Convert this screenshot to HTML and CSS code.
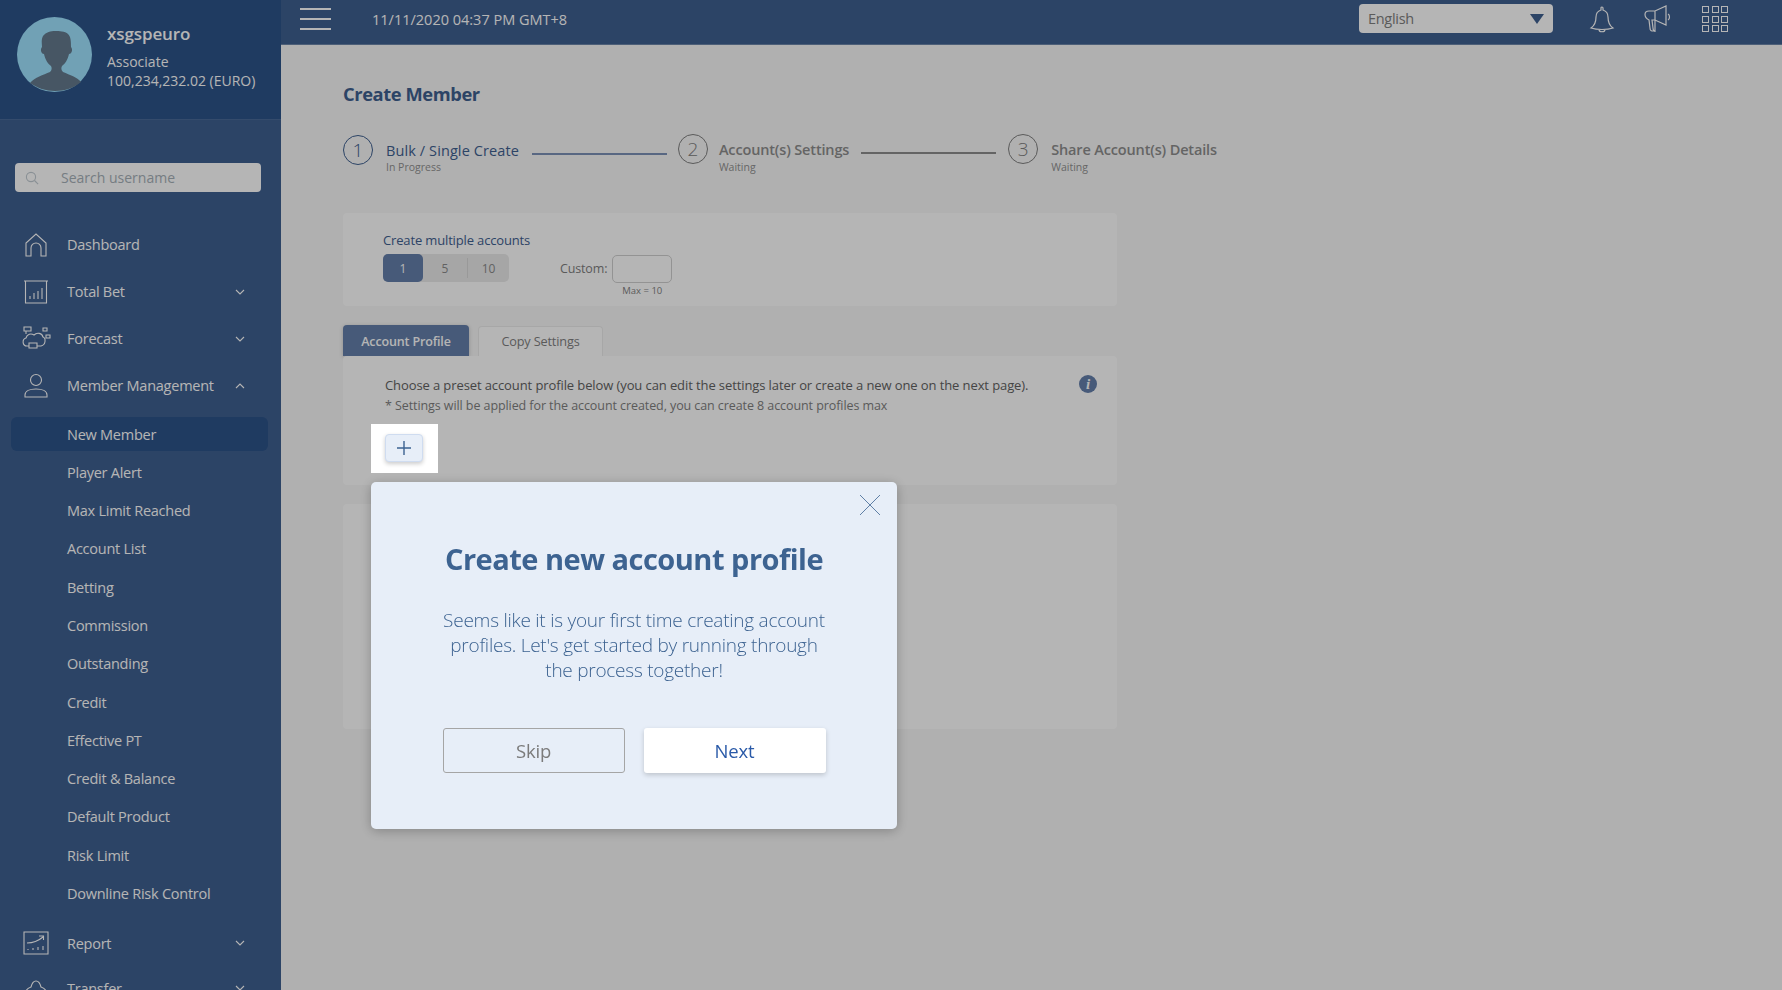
FILE: index.html

```html
<!DOCTYPE html>
<html lang="en">
<head>
    <meta charset="UTF-8">
    <meta name="viewport" content="width=device-width, initial-scale=1.0">
    <title>Create Member</title>
    <link rel="stylesheet" href="styles.css">
</head>
<body>
    <div class="app">
        <aside class="sidebar">
            <div class="profile">
                <svg class="avatar" viewBox="0 0 75 75">
                    <circle class="avatar-bg" cx="37.5" cy="37.5" r="37.5"/>
                    <path class="avatar-fg" d="M13 66c5-6 13-8 20-11 2-2 2-4 1-6-3-2-6-7-7-12-3 0-4-5-2-7 0-4-1-7 1-11 3-4 8-5 12-5 4 0 10 0 13 3 3 3 3 8 3 13 2 2 1 7-2 7-1 5-4 10-7 12-1 2-1 4 1 6 7 3 14 5 18 10-7 6-16 9-26 9-9 0-18-3-25-8z"/>
                </svg>
                <div class="profile-info">
                    <div class="profile-name">xsgspeuro</div>
                    <div class="profile-line">Associate</div>
                    <div class="profile-line">100,234,232.02 (EURO)</div>
                </div>
            </div>

            <div class="search">
                <svg class="search-icon" viewBox="0 0 14 14"><circle cx="6" cy="6" r="4.6"/><path d="M9.5 9.5l3.6 3.6"/></svg>
                <span>Search username</span>
            </div>

            <nav class="nav">
                <div class="nav-item">
                    <svg class="nav-icon" viewBox="0 0 26 26"><path d="M3 24V11L13 2l10 9v13h-5v-8a5 5 0 0 0-10 0v8z"/></svg>
                    <span>Dashboard</span>
                </div>
                <div class="nav-item">
                    <svg class="nav-icon" viewBox="0 0 26 26"><path d="M1 2h24M2.500 2v22h21V2M7 20v-3M11 20v-6M15 20v-8M19 20V9"/></svg>
                    <span>Total Bet</span>
                    <svg class="chevron" viewBox="0 0 10 6"><path d="M1 1l4 4 4-4"/></svg>
                </div>
                <div class="nav-item">
                    <svg class="nav-icon wide" viewBox="0 0 30 26"><path d="M8 20H6c-5 0-5-7-1-8 1-4 5-5 8-3 3-3 8-2 9 2 3 1 3 8-2 9h-4M8 17h8v5H8zM3 1h7v4H3zM5 5v3M22 2h4v3h-4zM25 9h4v3h-4z"/></svg>
                    <span>Forecast</span>
                    <svg class="chevron" viewBox="0 0 10 6"><path d="M1 1l4 4 4-4"/></svg>
                </div>
                <div class="nav-item">
                    <svg class="nav-icon" viewBox="0 0 26 26"><circle cx="13" cy="7" r="5.500"/><path d="M2 24v-2c0-4 5-6 11-6s11 2 11 6v2z"/></svg>
                    <span>Member Management</span>
                    <svg class="chevron" viewBox="0 0 10 6"><path d="M1 5l4-4 4 4"/></svg>
                </div>
                <div class="sub-list">
                    <a class="sub-item active">New Member</a>
                    <a class="sub-item">Player Alert</a>
                    <a class="sub-item">Max Limit Reached</a>
                    <a class="sub-item">Account List</a>
                    <a class="sub-item">Betting</a>
                    <a class="sub-item">Commission</a>
                    <a class="sub-item">Outstanding</a>
                    <a class="sub-item">Credit</a>
                    <a class="sub-item">Effective PT</a>
                    <a class="sub-item">Credit &amp; Balance</a>
                    <a class="sub-item">Default Product</a>
                    <a class="sub-item">Risk Limit</a>
                    <a class="sub-item">Downline Risk Control</a>
                </div>
                <div class="nav-item">
                    <svg class="nav-icon" viewBox="0 0 26 26"><path d="M1 2h24v22H1zM4 13c5 0 10-1 16-6M16 6h4.500v4M5 20v-1M10 20v-2M15 20v-3M20 20v-4"/></svg>
                    <span>Report</span>
                    <svg class="chevron" viewBox="0 0 10 6"><path d="M1 1l4 4 4-4"/></svg>
                </div>
                <div class="nav-item short">
                    <svg class="nav-icon" viewBox="0 0 26 26"><path d="M2 20c0-4 3-7 6-8 1-4 3-6 5-6s4 2 5 6c3 1 6 4 6 8z"/></svg>
                    <span>Transfer</span>
                    <svg class="chevron" viewBox="0 0 10 6"><path d="M1 1l4 4 4-4"/></svg>
                </div>
            </nav>
        </aside>

        <div class="main">
            <header class="topbar">
                <div class="burger"><i></i><i></i><i></i></div>
                <div class="datetime">11/11/2020 04:37 PM GMT+8</div>
                <div class="lang">
                    <span>English</span>
                    <b class="lang-arrow"></b>
                </div>
                <svg class="top-icon bell" viewBox="0 0 26 28"><path d="M2 23c3-2 5-5 5-11 0-4 2-6 5-7V3a1 1 0 0 1 2 0v2c3 1 5 3 5 7 0 6 2 9 5 11-3 1-7 1.500-11 1.500S5 24 2 23zM10 24.500c0 3 6 3 6 0"/></svg>
                <svg class="top-icon horn" viewBox="0 0 30 28"><path d="M1 9.500C1 7 3 6 5 6h6l11-5v19l-11-5H8l1 8c0 2 1 3 2 3H8c-1 0-2-1-2-3l-1-8c-2-1-4-3-4-5.500zM11 6v21M24 9c2 1 2 5 0 6"/></svg>
                <div class="apps"><i></i><i></i><i></i><i></i><i></i><i></i><i></i><i></i><i></i></div>
            </header>

            <main class="content">
                <h1 class="page-title">Create Member</h1>

                <div class="steps">
                    <div class="step current">
                        <div class="step-num">1</div>
                        <div>
                            <div class="step-name">Bulk / Single Create</div>
                            <div class="step-state">In Progress</div>
                        </div>
                    </div>
                    <div class="step-line current"></div>
                    <div class="step up">
                        <div class="step-num">2</div>
                        <div>
                            <div class="step-name">Account(s) Settings</div>
                            <div class="step-state">Waiting</div>
                        </div>
                    </div>
                    <div class="step-line up"></div>
                    <div class="step up last">
                        <div class="step-num">3</div>
                        <div>
                            <div class="step-name">Share Account(s) Details</div>
                            <div class="step-state">Waiting</div>
                        </div>
                    </div>
                </div>

                <section class="card multi">
                    <div class="multi-label">Create multiple accounts</div>
                    <div class="multi-row">
                        <div class="segments">
                            <span class="seg on">1</span>
                            <span class="seg">5</span>
                            <span class="seg sep">10</span>
                        </div>
                        <label class="custom-label">Custom:</label>
                        <div class="custom-box">
                            <div class="custom-input"></div>
                            <div class="custom-max">Max = 10</div>
                        </div>
                    </div>
                </section>

                <div class="tabs">
                    <div class="tab on">Account Profile</div>
                    <div class="tab">Copy Settings</div>
                </div>

                <section class="card preset">
                    <div class="preset-lead">Choose a preset account profile below (you can edit the settings later or create a new one on the next page).</div>
                    <div class="preset-note">* Settings will be applied for the account created, you can create 8 account profiles max</div>
                    <div class="info">i</div>
                    <div class="spot">
                        <button class="add">
                            <svg viewBox="0 0 16 16"><path d="M8 1v14M1 8h14"/></svg>
                        </button>
                    </div>
                </section>

                <section class="card lower"></section>
            </main>
        </div>
    </div>

    <div class="overlay">
        <div class="modal">
            <svg class="close" viewBox="0 0 20 20"><path d="M0 0l20 20M20 0L0 20"/></svg>
            <h2 class="modal-title">Create new account profile</h2>
            <p class="modal-text">Seems like it is your first time creating account profiles. Let's get started by running through the process together!</p>
            <div class="modal-btns">
                <button class="btn skip">Skip</button>
                <button class="btn next">Next</button>
            </div>
        </div>
    </div>
</body>
</html>
```

FILE: styles.css

```css
* { box-sizing: border-box; }
html, body { margin: 0; height: 990px; overflow: hidden; }
body { font-family: "Open Sans", "Noto Sans", sans-serif; background-color: #f8f8f8; color: #848484; }

.app { display: flex; height: 990px; }

/* sidebar */
.sidebar { width: 281px; flex: none; background-color: #3f6090; color: #fff; overflow: hidden; }
.profile { height: 120px; padding: 17px 0 0 17px; display: flex; gap: 15px; background-color: #2c5389; border-bottom: 1px solid #4a6a98; }
.avatar { width: 75px; height: 75px; flex: none; }
.avatar-bg { fill: #9fe3ff; }
.avatar-fg { fill: #647a8d; }
.profile-name { font-size: 17px; font-weight: 600; line-height: 22px; margin-top: 6px; margin-bottom: 7px; letter-spacing: -0.1px; }
.profile-line { font-size: 14px; line-height: 19px; letter-spacing: 0; }

.search { height: 29px; margin: 43px 20px 29px 15px; padding-left: 10px; display: flex; align-items: center; background-color: #fff; border-radius: 4px; color: #a6b0b8; font-size: 14px; }
.search-icon { width: 14px; height: 14px; margin-right: 22px; fill: none; stroke: #c2cbd2; stroke-width: 1.100; }

.nav-item { height: 47px; padding-left: 23px; display: flex; align-items: center; font-size: 14.500px; letter-spacing: -0.25px; position: relative; }
.nav-item.short { height: 43px; }
.nav-icon { width: 26px; height: 26px; margin-right: 18px; flex: none; fill: none; stroke: #fff; stroke-width: 1.100; }
.nav-icon.wide { width: 30px; margin-left: -2px; margin-right: 16px; }
.chevron { width: 10px; height: 6px; margin-left: auto; margin-right: 36px; fill: none; stroke: #fff; stroke-width: 1.100; }

.sub-list { padding-top: 8px; margin-bottom: 9px; }
.sub-item { display: flex; align-items: center; height: 34px; margin: 0 13px 4.300px 11px; padding-left: 56px; border-radius: 6px; font-size: 14.500px; letter-spacing: -0.25px; }
.sub-item.active { background-color: #2c5389; }

/* top bar */
.main { flex: 1; min-width: 0; }
.topbar { height: 45px; padding-left: 19px; padding-right: 54px; display: flex; align-items: center; background-color: #3f6090; border-bottom: 1px solid #6d86aa; color: #fff; }
.burger { width: 31px; display: flex; flex-direction: column; gap: 8px; margin-top: -6px; }
.burger i { display: block; height: 2px; background-color: #fff; }
.datetime { margin-left: 41px; font-size: 14.500px; letter-spacing: 0; margin-top: -6px; }
.lang { width: 194px; height: 29px; margin-left: auto; margin-top: -8px; padding: 1px 9px 0; display: flex; align-items: center; justify-content: space-between; background-color: #fff; border-radius: 4px; color: #808080; font-size: 14.500px; letter-spacing: -0.3px; }
.lang-arrow { width: 0; height: 0; border-left: 7.500px solid transparent; border-right: 7.500px solid transparent; border-top: 10px solid #3f6090; }
.top-icon { fill: none; stroke: #fff; stroke-width: 1.200; margin-top: -6px; }
.bell { width: 26px; height: 28px; margin-left: 36px; }
.horn { width: 30px; height: 28px; margin-left: 29px; }
.apps { width: 26px; height: 26px; margin-left: 28px; margin-top: -6px; display: grid; grid-template-columns: repeat(3, 7px); gap: 2.500px; }
.apps i { border: 1.200px solid #fff; }

/* page */
.content { padding: 32px 0 0 62px; }
.page-title { margin: 0; font-size: 18.300px; line-height: 34px; font-weight: 700; letter-spacing: -0.4px; color: #3f6090; }

.steps { display: flex; align-items: flex-start; margin-top: 24px; height: 78px; }
.step { display: flex; gap: 13px; }
.step.up { margin-top: -1px; gap: 11px; }
.step.last { gap: 13px; }
.step-num { width: 30px; height: 30px; flex: none; display: flex; align-items: center; justify-content: center; border-radius: 50%; border: 1.500px solid #3f6090; color: #3f6090; font-size: 19px; font-weight: 300; }
.step.up .step-num { border: 1px solid #808080; color: #808080; }
.step-name { font-size: 14.500px; line-height: 20px; margin-top: 6px; letter-spacing: 0.1px; color: #3f6090; }
.step.up .step-name { font-weight: 600; color: #8e8e8e; letter-spacing: -0.15px; }
.step-state { font-size: 10.500px; line-height: 13px; color: #919191; }
.step.up .step-state { margin-top: 1px; }
.step-line { width: 135px; height: 2px; flex: none; margin: 18px 11px 0 13px; }
.step-line.current { background-color: #7d92b8; }
.step-line.up { background-color: #8e8e8e; margin: 17px 12px 0 12px; }

.card { width: 774px; background-color: #fff; border-radius: 4px; }
.multi { height: 93px; padding: 19px 0 0 40px; }
.multi-label { font-size: 13px; line-height: 17px; font-weight: 500; letter-spacing: -0.15px; color: #3f6090; }
.multi-row { display: flex; align-items: flex-start; margin-top: 5px; }
.segments { display: flex; height: 28px; background-color: #eaeaea; border-radius: 5px; }
.seg { width: 44px; display: flex; align-items: center; justify-content: center; font-size: 12px; color: #8a8a8a; position: relative; }
.seg.on { width: 40px; background-color: #647fab; color: #fff; border-radius: 5px; }
.seg.sep { width: 42px; border-left: 1px solid #d8d8d8; margin: 4px 0; }
.custom-label { margin-left: 51px; margin-right: 5px; line-height: 29px; font-size: 12.500px; letter-spacing: -0.15px; color: #7f7f7f; }
.custom-box { width: 60px; margin-top: 1px; }
.custom-input { height: 28px; border: 1px solid #d0d0d0; border-radius: 5px; background-color: #fff; }
.custom-max { margin-top: 1px; text-align: center; font-size: 9.500px; line-height: 14px; color: #7f7f7f; }

.tabs { display: flex; gap: 9px; margin-top: 19px; height: 31px; align-items: flex-end; }
.tab { width: 125px; height: 30px; padding-bottom: 2px; display: flex; align-items: center; justify-content: center; background-color: #fff; border: 1px solid #ececec; border-bottom: 0; border-radius: 4px 4px 0 0; font-size: 12.700px; letter-spacing: -0.15px; color: #7f7f7f; }
.tab.on { width: 126px; height: 31px; padding-bottom: 0; padding-top: 1px; background-color: #647fab; border: 0; color: #fff; font-weight: 600; font-size: 12.500px; box-shadow: 0 1px 4px rgba(0, 0, 0, 0.2); }

.preset { height: 129px; padding: 19px 0 0 42px; position: relative; }
.preset-lead { font-size: 13px; line-height: 21px; font-weight: 500; letter-spacing: -0.1px; color: #626262; }
.preset-note { font-size: 12.500px; line-height: 20px; letter-spacing: -0.08px; color: #7f7f7f; }
.info { width: 18px; height: 18px; position: absolute; top: 19px; right: 20px; display: flex; align-items: center; justify-content: center; border-radius: 50%; background-color: #647fab; color: #fff; font-family: "Liberation Serif", serif; font-size: 15px; font-weight: 700; font-style: italic; }

/* stays lit above the dimmed page */
.spot { width: 67px; height: 49px; margin: 8px 0 0 -14px; padding: 10px 0 0 14px; background-color: #fff; position: relative; z-index: 20; }
.add { width: 38px; height: 28px; padding: 0; display: flex; align-items: center; justify-content: center; background-color: #e7eef8; border: 1px solid #cfdcf0; border-radius: 4px; box-shadow: 0 2px 4px rgba(0, 0, 0, 0.2); }
.add svg { width: 16px; height: 16px; fill: none; stroke: #3d6391; stroke-width: 1.400; }

.lower { height: 225px; margin-top: 19px; }

/* modal */
.overlay { position: fixed; inset: 0; background-color: rgba(0, 0, 0, 0.29); z-index: 10; }
.modal { position: absolute; left: 371px; top: 482px; width: 526px; height: 347px; padding-top: 59px; text-align: center; background-color: #e7eef8; border-radius: 5px; box-shadow: 0 2px 12px rgba(0, 0, 0, 0.25); color: #3d6391; }
.close { position: absolute; top: 13px; right: 17px; width: 20px; height: 20px; fill: none; stroke: #3d6391; stroke-width: 0.800; }
.modal-title { margin: 0; font-size: 29px; line-height: 36px; font-weight: 700; letter-spacing: -0.5px; }
.modal-text { width: 390px; margin: 31px auto 0; font-size: 19px; line-height: 25px; font-weight: 300; letter-spacing: -0.25px; }
.modal-btns { display: flex; gap: 19px; justify-content: center; margin-top: 45px; }
.btn { width: 182px; height: 45px; font-family: inherit; font-size: 18.500px; letter-spacing: -0.2px; border-radius: 3px; }
.skip { background: none; border: 1px solid #a5a5a5; color: #7b7b7b; }
.next { background-color: #fff; border: 0; color: #2a5aa8; box-shadow: 0 2px 5px rgba(0, 0, 0, 0.18); }
```
